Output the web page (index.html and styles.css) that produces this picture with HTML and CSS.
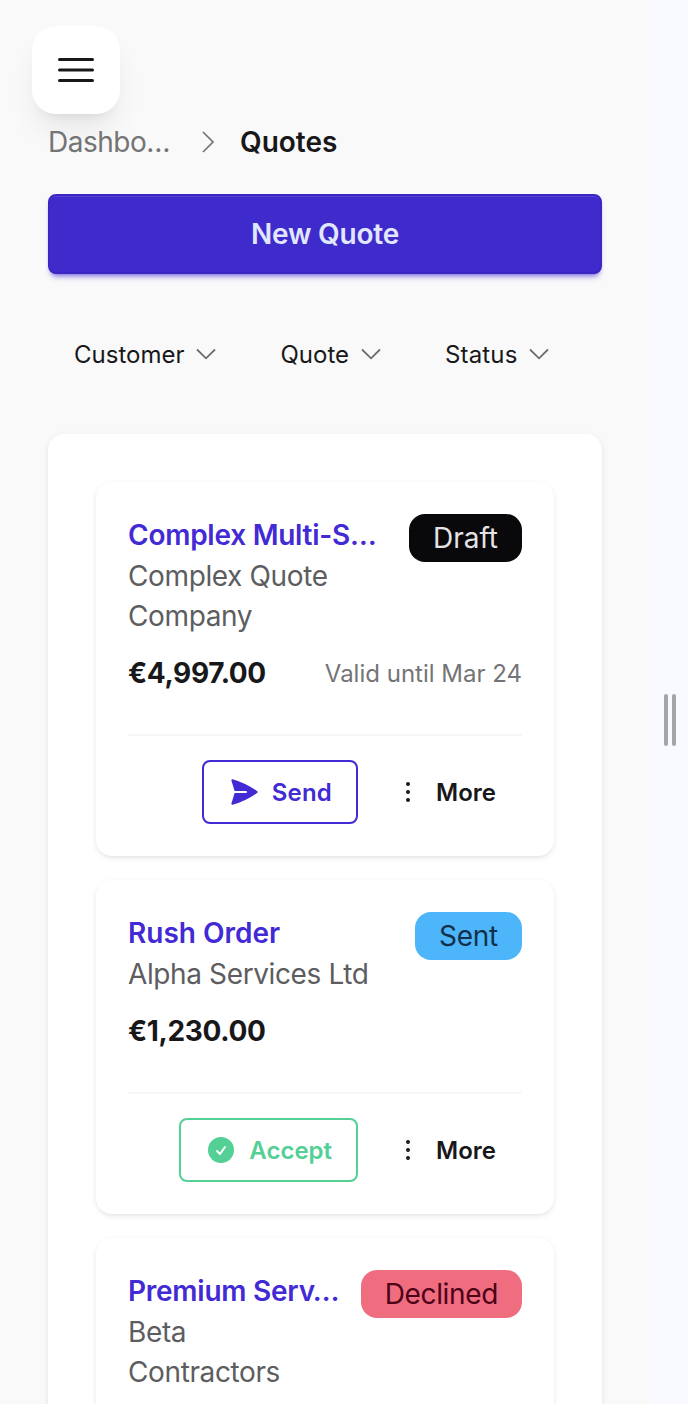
FILE: index.html
```html
<!DOCTYPE html>
<html lang="en">
<head>
  <meta charset="UTF-8">
  <meta name="viewport" content="width=device-width, initial-scale=1.0">
  <title>Quotes</title>
  <link rel="stylesheet" href="styles.css">
</head>
<body>
  <div class="page">
    <button class="menu" aria-label="Menu">
      <svg viewBox="0 0 24 24"><path d="M3.75 6.75h16.5M3.75 12h16.5M3.75 17.25h16.5"/></svg>
    </button>

    <nav class="breadcrumbs">
      <a class="parent">Dashbo…</a>
      <svg viewBox="0 0 24 24"><path d="m8.25 4.5 7.5 7.5-7.5 7.5"/></svg>
      <span class="current">Quotes</span>
    </nav>

    <button class="new-quote">New Quote</button>

    <div class="filters">
      <button class="filter"><span>Customer</span><svg viewBox="0 0 20 12"><path d="m1 1.5 9 8.8 9-8.8"/></svg></button>
      <button class="filter"><span>Quote</span><svg viewBox="0 0 20 12"><path d="m1 1.5 9 8.8 9-8.8"/></svg></button>
      <button class="filter status"><span>Status</span><svg viewBox="0 0 20 12"><path d="m1 1.5 9 8.8 9-8.8"/></svg></button>
    </div>

    <main class="list">
      <article class="quote">
        <div class="top">
          <div class="info">
            <h2 class="long">Complex Multi-S…</h2>
            <p>Complex Quote Company</p>
          </div>
          <span class="badge draft">Draft</span>
        </div>
        <div class="amount">
          <strong>€4,997.00</strong>
          <span class="valid">Valid until Mar 24</span>
        </div>
        <div class="actions">
          <button class="btn send">
            <svg viewBox="0 0 24 24"><path d="M3.478 2.404a.75.75 0 0 0-.926.941l2.432 7.905H13.5a.75.75 0 0 1 0 1.5H4.984l-2.432 7.905a.75.75 0 0 0 .926.94 60.519 60.519 0 0 0 18.445-8.986.75.75 0 0 0 0-1.218A60.517 60.517 0 0 0 3.478 2.404Z"/></svg>
            <span>Send</span>
          </button>
          <button class="btn more">
            <svg viewBox="0 0 24 24"><circle cx="12" cy="6" r="1.5"/><circle cx="12" cy="12" r="1.5"/><circle cx="12" cy="18" r="1.5"/></svg>
            <span>More</span>
          </button>
        </div>
      </article>

      <article class="quote">
        <div class="top">
          <div class="info">
            <h2>Rush Order</h2>
            <p>Alpha Services Ltd</p>
          </div>
          <span class="badge sent">Sent</span>
        </div>
        <div class="amount">
          <strong>€1,230.00</strong>
        </div>
        <div class="actions">
          <button class="btn accept">
            <svg viewBox="0 0 24 24"><circle cx="12" cy="12" r="9.75"/><path class="tick" d="m9 12.75 2.25 2.25 3.75-5.25"/></svg>
            <span>Accept</span>
          </button>
          <button class="btn more">
            <svg viewBox="0 0 24 24"><circle cx="12" cy="6" r="1.5"/><circle cx="12" cy="12" r="1.5"/><circle cx="12" cy="18" r="1.5"/></svg>
            <span>More</span>
          </button>
        </div>
      </article>

      <article class="quote">
        <div class="top">
          <div class="info">
            <h2 class="long">Premium Serv…</h2>
            <p>Beta Contractors</p>
          </div>
          <span class="badge declined">Declined</span>
        </div>
      </article>
    </main>
  </div>

  <div class="handle"><i></i><i></i></div>
</body>
</html>
```
FILE: styles.css
```css
* {
  box-sizing: border-box;
}

body {
  margin: 0;
  height: 1404px;
  display: flex;
  overflow: hidden;
  font-family: Inter, "Liberation Sans", sans-serif;
  font-size: 28px;
  color: #18181b;
  background: #f8faff;
}

button {
  font-family: inherit;
  color: inherit;
  border: none;
  background: none;
  padding: 0;
}

svg {
  display: block;
  flex-shrink: 0;
  fill: none;
}

h2, p {
  margin: 0;
}

.page {
  width: 650px;
  height: 1404px;
  padding: 26px 48px 0;
  background: #f9f9f9;
  overflow: hidden;
}

.menu {
  display: flex;
  align-items: center;
  justify-content: center;
  width: 88px;
  height: 88px;
  margin-left: -16px;
  border-radius: 24px;
  background: #fff;
  box-shadow: 0 20px 30px -6px rgba(0, 0, 0, 0.08), 0 8px 12px -8px rgba(0, 0, 0, 0.1);
}

.menu svg {
  width: 48px;
  height: 48px;
  stroke: #18181b;
  stroke-width: 1.5;
  stroke-linecap: round;
}

.breadcrumbs {
  display: flex;
  align-items: center;
  height: 56px;
}

.breadcrumbs .parent {
  width: 128px;
  color: #747474;
  letter-spacing: -0.5px;
  white-space: nowrap;
}

.breadcrumbs svg {
  width: 32px;
  height: 32px;
  margin: 0 16px;
  stroke: #747474;
  stroke-width: 1.3;
}

.current {
  font-weight: 600;
}

.new-quote {
  display: block;
  width: 554px;
  height: 80px;
  margin-top: 24px;
  border: 2px solid #3c26c3;
  border-radius: 8px;
  background: #3f2acb;
  box-shadow: inset 0 2px 0 -1px #5643d2, 0 6px 6px -4px rgba(66, 42, 213, 0.5), 0 3px 4px -2px rgba(66, 42, 213, 0.4);
  color: #e0e7ff;
  font-size: 28px;
  font-weight: 600;
  letter-spacing: -0.2px;
}

.filters {
  display: flex;
  gap: 12px;
  height: 64px;
  margin-top: 48px;
}

.filter {
  display: flex;
  align-items: center;
  gap: 12px;
  padding: 0 26px;
  font-size: 24px;
}

.filter.status {
  letter-spacing: 0.15px;
}

.filter svg {
  width: 20px;
  height: 12px;
  stroke: #6c6c6c;
  stroke-width: 1.8;
}

.list {
  display: flex;
  flex-direction: column;
  gap: 24px;
  width: 554px;
  height: 1100px;
  margin-top: 48px;
  padding: 48px;
  border-radius: 16px;
  background: #fff;
  box-shadow: 0 2px 6px rgba(0, 0, 0, 0.08), 0 2px 4px -2px rgba(0, 0, 0, 0.08);
}

.quote {
  flex-shrink: 0;
  padding: 32px;
  border-radius: 16px;
  background: #fff;
  box-shadow: 0 2px 6px rgba(0, 0, 0, 0.08), 0 2px 4px -2px rgba(0, 0, 0, 0.08);
}

.top {
  display: flex;
  align-items: flex-start;
  gap: 16px;
}

.info {
  flex: 1;
  min-width: 0;
}

.info h2 {
  font-size: 28px;
  font-weight: 600;
  line-height: 42px;
  color: #422ad5;
  white-space: nowrap;
}

.info .long {
  letter-spacing: -0.25px;
}

.info p {
  line-height: 40px;
  letter-spacing: -0.38px;
  color: #5d5d5f;
}

.badge {
  flex-shrink: 0;
  height: 48px;
  padding: 0 24px;
  border-radius: 16px;
  line-height: 48px;
}

.draft {
  color: #e4e4e7;
  background: #09090b;
}

.sent {
  color: #12304a;
  background: #4db5f9;
  letter-spacing: -0.25px;
}

.declined {
  color: #4d0218;
  background: #f06d80;
  letter-spacing: -0.35px;
}

.amount {
  display: flex;
  align-items: center;
  justify-content: space-between;
  height: 42px;
  margin-top: 16px;
}

.amount strong {
  font-weight: 700;
  letter-spacing: -0.35px;
}

.valid {
  font-size: 24px;
  color: #747476;
}

.actions {
  display: flex;
  justify-content: flex-end;
  gap: 8px;
  margin-top: 40px;
  padding-top: 24px;
  border-top: 2px solid #f8f8f8;
}

.btn {
  display: flex;
  align-items: center;
  gap: 12px;
  height: 64px;
  padding: 0 24px;
  border: 2px solid transparent;
  border-radius: 8px;
  font-size: 24px;
  font-weight: 600;
}

.btn svg {
  width: 32px;
  height: 32px;
  fill: currentColor;
}

.send {
  color: #422ad5;
  border-color: #422ad5;
  letter-spacing: 0.2px;
}

.accept {
  color: #54cf96;
  border-color: #54cf96;
}

.btn .tick {
  fill: none;
  stroke: #fff;
  stroke-width: 1.5;
  stroke-linecap: round;
  stroke-linejoin: round;
}

.handle {
  display: flex;
  align-items: center;
  gap: 4px;
  height: 1404px;
  margin-left: 14px;
  padding-top: 36px;
}

.handle i {
  width: 4px;
  height: 52px;
  border-radius: 2px;
  background: #a5a5a5;
}
```
